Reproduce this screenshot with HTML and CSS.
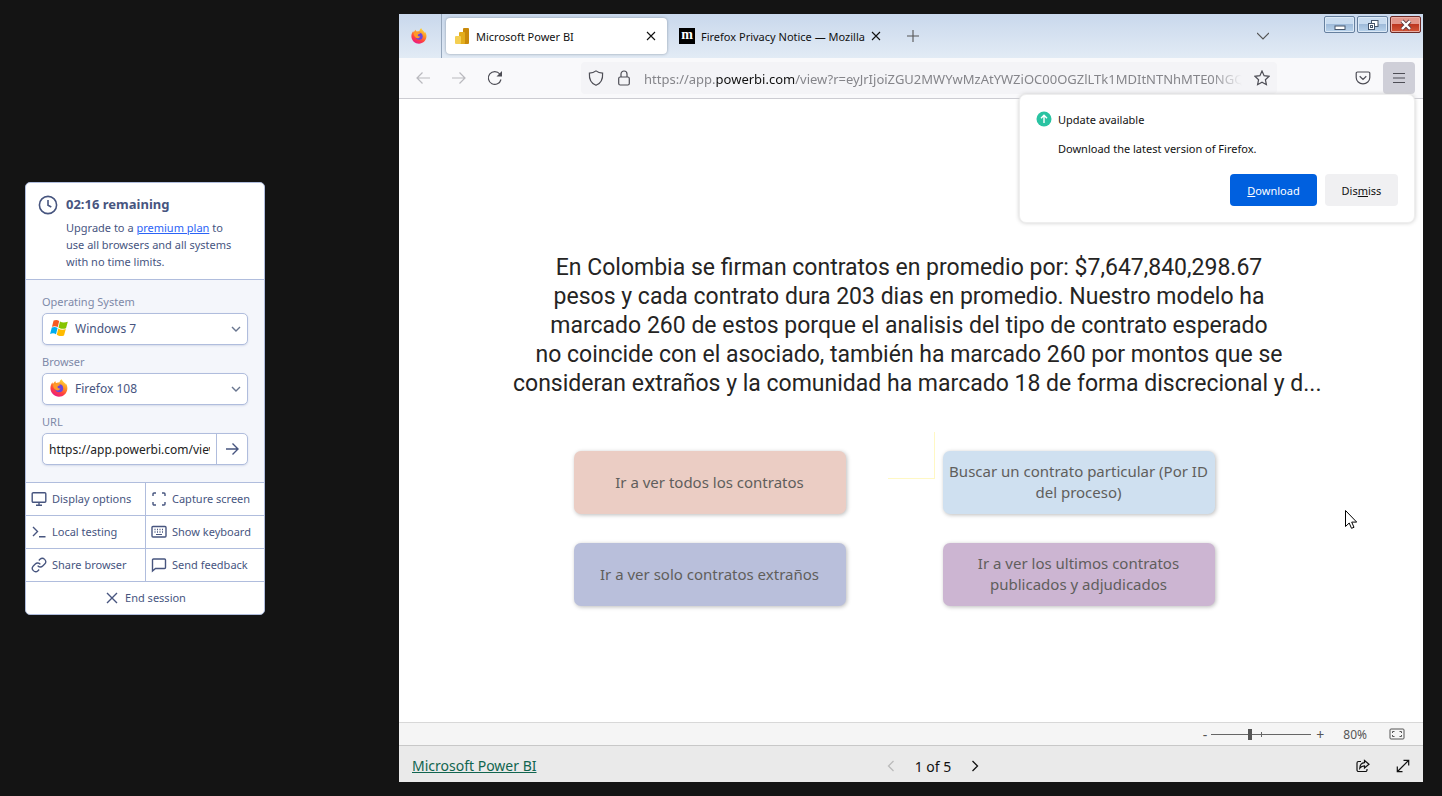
FILE: index.html
```html
<!DOCTYPE html>
<html lang="es">
<head>
<meta charset="utf-8">
<title>Live session</title>
<link rel="stylesheet" href="styles.css">
</head>
<body>
<svg class="defs" aria-hidden="true">
  <defs>
    <linearGradient id="fox" x1="0.8" y1="0" x2="0.3" y2="1"><stop offset="0" stop-color="#ffe23e"/><stop offset="0.4" stop-color="#ff9124"/><stop offset="0.7" stop-color="#ff4040"/><stop offset="1" stop-color="#e8178a"/></linearGradient>
    <symbol id="firefox" viewBox="0 0 20 20">
      <path fill="url(#fox)" d="M10.6 3.6C10.800 2 11.900.700 13 .300c.500 1.800 1.700 2.400 3 4 .800.900 1.100 1.400 1.300 2 .100-.600.100-1.200-.100-1.800C18.800 6.300 19.500 8.500 19.300 11c-.400 5-4.500 8.600-9.300 8.600C4.900 19.600.700 15.700.500 10.600.400 8 1.300 5.300 2.800 3.600c0 .800.200 1.400.500 1.900C4 4.400 4.800 3 6 2.200c0 1 .300 1.700.900 2.300 1.200-.300 2.600-.700 3.700-.900z"/>
      <circle cx="10.200" cy="10.200" r="4.400" fill="#6a45dd"/>
      <path fill="#ff9a28" d="M3.500 6c2-1.600 4.200-1.700 5.900-.500 1 .500 2 .600 2.200 1-.700 1.100-2.900 1-3.200 2.200-.200 1.500 1.800 2.300 3.200 1.500-1 2.800-4.400 3.300-6.200 1.300C3.900 10 3.200 8 3.500 6z"/>
    </symbol>
  </defs>
</svg>

<aside class="side">
  <section class="panel">
    <header class="remaining">
      <svg class="clock" viewBox="0 0 20 20"><circle cx="10" cy="10" r="8.600"/><path d="M10 5v5.300l3.300 1.700"/></svg>
      <div>
        <h1>02:16 remaining</h1>
        <p>Upgrade to a <a href="#plan">premium plan</a> to<br>use all browsers and all systems<br>with no time limits.</p>
      </div>
    </header>
    <form class="fields">
      <label for="os">Operating System</label>
      <div class="pick">
        <svg class="pick-icon" viewBox="0 0 18 18"><path fill="#f65a22" d="M3.600 1.600C5.700.600 7.500.900 9.200 1.900L7.800 8.100C6 7 4.200 6.900 2 7.700z"/><path fill="#86c400" d="M10 2.500c2 1.200 5 1.100 7.800.200L16 9.200c-2.500 1-5.400.900-7.500-.600z"/><path fill="#00adef" d="M1.800 8.600c2-.800 4-.700 5.800.400L6 15.200C4.300 14 2.200 14.100.100 14.900z"/><path fill="#ffbb00" d="M8.300 9.500c2.300 1.400 4.800 1.500 7.500.600L14 16.500c-2.500.900-5.100.900-7.200-.700z"/></svg>
        <select id="os"><option>Windows 7</option></select>
        <svg class="pick-arrow" viewBox="0 0 10 10"><path d="M1 3l4 4 4-4"/></svg>
      </div>
      <label for="br">Browser</label>
      <div class="pick">
        <svg class="pick-icon" viewBox="0 0 20 20"><use href="#firefox"/></svg>
        <select id="br"><option>Firefox 108</option></select>
        <svg class="pick-arrow" viewBox="0 0 10 10"><path d="M1 3l4 4 4-4"/></svg>
      </div>
      <label for="url">URL</label>
      <div class="url">
        <input id="url" type="text" value="https://app.powerbi.com/view?r=eyJrIjoi">
        <button type="button" aria-label="Go"><svg viewBox="0 0 14 14"><path d="M1 7h12M7.500 1.500L13 7l-5.500 5.500"/></svg></button>
      </div>
    </form>
    <nav class="actions">
      <button type="button"><svg viewBox="0 0 16 16"><rect x="1.200" y="1.700" width="13.600" height="9.600" rx="1"/><path d="M8 11.500V14M5 14.300h6"/></svg>Display options</button>
      <button type="button"><svg viewBox="0 0 16 16"><path d="M2 5V3a1 1 0 0 1 1-1h2M11 2h2a1 1 0 0 1 1 1v2M14 11v2a1 1 0 0 1-1 1h-2M5 14H3a1 1 0 0 1-1-1v-2"/></svg>Capture screen</button>
      <button type="button"><svg viewBox="0 0 16 16"><path d="M2 3l4.500 4.500L2 12M8 12.700h6.500"/></svg>Local testing</button>
      <button type="button"><svg viewBox="0 0 16 16"><rect x="1" y="2.500" width="14" height="10.500" rx="1"/><path stroke-dasharray="1 1.500" d="M3.500 5.500h9.500M3.500 8h9.500"/><path d="M5 10.500h6" stroke-width="1"/></svg>Show keyboard</button>
      <button type="button"><svg viewBox="0 0 24 24"><path stroke-width="2" d="M10 13a5 5 0 0 0 7.540.540l3-3a5 5 0 0 0-7.070-7.070l-1.720 1.710M14 11a5 5 0 0 0-7.540-.540l-3 3a5 5 0 0 0 7.070 7.070l1.710-1.710"/></svg>Share browser</button>
      <button type="button"><svg viewBox="0 0 16 16"><path d="M1.500 14V3a1 1 0 0 1 1-1h11a1 1 0 0 1 1 1v7.500a1 1 0 0 1-1 1H4.500z"/></svg>Send feedback</button>
      <button type="button" class="end"><svg viewBox="0 0 16 16"><path d="M3 3l10 10M13 3L3 13"/></svg>End session</button>
    </nav>
  </section>
</aside>

<main class="browser">
  <header class="tabs">
    <div class="pinned"><svg viewBox="0 0 20 20"><use href="#firefox"/></svg></div>
    <div class="tab active">
      <svg class="fav" viewBox="0 0 16 16"><rect x="9" y="0" width="6" height="16" rx="1" fill="#c98a0b"/><rect x="5" y="4" width="6" height="12" rx="1" fill="#e3ad1c"/><rect x="1" y="8" width="6" height="8" rx="1" fill="#f4cf52"/></svg>
      <span>Microsoft Power BI</span>
      <button type="button" aria-label="Close tab"><svg viewBox="0 0 10 10"><path d="M1 1l8 8M9 1L1 9"/></svg></button>
    </div>
    <div class="tab">
      <span class="moz">m</span>
      <span>Firefox Privacy Notice — Mozilla</span>
      <button type="button" aria-label="Close tab"><svg viewBox="0 0 10 10"><path d="M1 1l8 8M9 1L1 9"/></svg></button>
    </div>
    <button type="button" class="newtab" aria-label="New tab"><svg viewBox="0 0 12 12"><path d="M6 0v12M0 6h12"/></svg></button>
    <button type="button" class="list" aria-label="List tabs"><svg viewBox="0 0 12 12"><path d="M0 3l6 6 6-6"/></svg></button>
    <div class="win">
      <button type="button" aria-label="Minimize"><svg viewBox="0 0 16 12"><rect x="3" y="7" width="10" height="3.500"/></svg></button>
      <button type="button" aria-label="Restore"><svg viewBox="0 0 16 12"><rect x="6.500" y="1.500" width="6.500" height="6"/><rect x="3.500" y="4.500" width="6" height="6"/><rect x="5.500" y="6.500" width="2" height="2"/></svg></button>
      <button type="button" class="x" aria-label="Close"><svg viewBox="0 0 16 12"><path class="xo" d="M4 2l8 8M12 2l-8 8"/><path class="xi" d="M4 2l8 8M12 2l-8 8"/></svg></button>
    </div>
  </header>

  <div class="toolbar">
    <button type="button" class="off" aria-label="Back"><svg viewBox="0 0 16 16"><path d="M15 8H2M7.500 2.500L2 8l5.500 5.500"/></svg></button>
    <button type="button" class="off" aria-label="Forward"><svg viewBox="0 0 16 16"><path d="M1 8h13M8.500 2.500L14 8l-5.500 5.500"/></svg></button>
    <button type="button" aria-label="Reload"><svg viewBox="0 0 16 16"><path d="M14 9.500A6.400 6.400 0 1 1 12.800 4"/><path class="solid" d="M15 1v5.500H9.500z"/></svg></button>
    <div class="address">
      <svg viewBox="0 0 16 16"><path d="M8 .900c2 1.600 4.200 2.200 6.600 2.300C15 9 12.500 13.500 8 15.300 3.500 13.500 1 9 1.400 3.200 3.800 3.100 6 2.500 8 .900z"/></svg>
      <svg viewBox="0 0 16 16"><rect x="2.700" y="7" width="10.600" height="8" rx="1.500"/><path d="M5 7V4a3 3 0 0 1 6 0v3"/></svg>
      <div class="link">https://app.<b>powerbi.com</b>/view?r=eyJrIjoiZGU2MWYwMzAtYWZiOC00OGZlLTk1MDItNTNhMTE0NGQ</div>
      <svg viewBox="0 0 16 16"><path d="M8 1l2.100 4.700 5 .600-3.700 3.400 1 5L8 12.200l-4.400 2.500 1-5L.900 6.300l5-.600z"/></svg>
    </div>
    <div class="ends">
      <button type="button" aria-label="Save to Pocket"><svg viewBox="0 0 16 16"><path d="M2.500 2h11a1.300 1.300 0 0 1 1.300 1.300V7.500a6.800 6.300 0 0 1-13.600 0V3.300A1.300 1.300 0 0 1 2.500 2zM4.700 6.300L8 9.500l3.300-3.200"/></svg></button>
      <button type="button" class="menu" aria-label="Menu"><svg viewBox="0 0 16 16"><path d="M2 3.500h12M2 8h12M2 12.500h12"/></svg></button>
    </div>
  </div>

  <section class="report">
    <p class="headline">En Colombia se firman contratos en promedio por: $7,647,840,298.67<br>pesos y cada contrato dura 203 dias en promedio. Nuestro modelo ha<br>marcado 260 de estos porque el analisis del tipo de contrato esperado<br>no coincide con el asociado, también ha marcado 260 por montos que se<br>consideran extraños y la comunidad ha marcado 18 de forma discrecional y d...</p>
    <div class="tiles">
      <button type="button" class="t1">Ir a ver todos los contratos</button>
      <button type="button" class="t2">Buscar un contrato particular (Por ID del proceso)</button>
      <button type="button" class="t3">Ir a ver solo contratos extraños</button>
      <button type="button" class="t4">Ir a ver los ultimos contratos publicados y adjudicados</button>
      <i class="trace"></i>
    </div>
    <svg class="cursor" viewBox="0 0 12 19"><path d="M.500.500v16l3.700-3.500 2.300 5.300 2.500-1-2.300-5.200h5z"/></svg>
  </section>

  <div class="zoombar">
    <button type="button" aria-label="Zoom out">-</button>
    <input type="range" min="10" max="150" value="64" aria-label="Zoom">
    <button type="button" aria-label="Zoom in">+</button>
    <span>80%</span>
    <button type="button" aria-label="Fit to page"><svg viewBox="0 0 16 12"><rect x="1" y="1" width="14" height="10" rx="1"/><path d="M3.500 5V3.500H5.500M10.500 3.500h2V5M12.500 7v1.500h-2M5.500 8.500h-2V7"/></svg></button>
  </div>
  <footer class="foot">
    <a href="#powerbi">Microsoft Power BI</a>
    <div class="pager">
      <button type="button" class="prev" aria-label="Previous"><svg viewBox="0 0 8 12"><path d="M6.500 1l-5 5 5 5"/></svg></button>
      <span>1 of 5</span>
      <button type="button" aria-label="Next"><svg viewBox="0 0 8 12"><path d="M1.500 1l5 5-5 5"/></svg></button>
    </div>
    <div class="tools">
      <button type="button" aria-label="Share"><svg viewBox="0 0 14 14"><path d="M5 2.500H2.500A1.500 1.500 0 0 0 1 4v7a1.500 1.500 0 0 0 1.500 1.500h7A1.500 1.500 0 0 0 11 11v-1M8.500 1.500L13 5.200 8.500 9V6.800C6.500 6.800 5 7.500 3.800 9.200 4 6 5.500 3.900 8.500 3.700z"/></svg></button>
      <button type="button" aria-label="Full screen"><svg viewBox="0 0 14 14"><path d="M1.500 12.500l11-11M7.500 1.300h5.200v5.200M1.300 7.500v5.200h5.200"/></svg></button>
    </div>
  </footer>

  <div class="popup" role="dialog" aria-label="Update available">
    <svg viewBox="0 0 16 16"><circle cx="8" cy="8" r="7.500"/><path d="M8 12V4.500M5 7.300l3-3 3 3"/></svg>
    <div class="popup-text">
      <strong>Update available</strong>
      <p>Download the latest version of Firefox.</p>
    </div>
    <div class="popup-buttons">
      <button type="button" class="primary"><u>D</u>ownload</button>
      <button type="button">Dis<u>m</u>iss</button>
    </div>
  </div>
</main>
</body>
</html>
```
FILE: styles.css
```css
* { box-sizing: border-box; }
body {
  margin: 0;
  min-height: 100vh;
  display: flex;
  background: #141414;
  font: 11px/17px "Noto Sans", "Open Sans", sans-serif;
  color: #47557f;
}
button, select, input { font: inherit; color: inherit; margin: 0; }
button { border: 0; padding: 0; background: none; display: flex; align-items: center; justify-content: center; }
svg { display: block; flex: none; fill: none; stroke: currentColor; stroke-width: 1.4; }
.defs { position: absolute; width: 0; height: 0; }
h1, p { margin: 0; }

.side { width: 399px; flex: none; display: flex; align-items: center; padding-left: 25px; }
.panel { width: 240px; background: #fff; border: 1px solid #b0bddd; border-radius: 5px; overflow: hidden; }
.remaining { display: flex; gap: 8px; padding: 12px; border-bottom: 1px solid #b0bddd; padding-bottom: 9px; }
.remaining h1 { font-size: 13px; line-height: 19px; font-weight: 700; margin-bottom: 5px; white-space: nowrap; }
.remaining p { white-space: nowrap; }
.remaining a { color: #2b63f6; }
.clock { width: 20px; height: 20px; stroke-width: 1.6; }
.fields { display: flex; flex-direction: column; background: #f4f6fb; padding: 14px 16px 17px; }
.fields label { color: #7e89a8; line-height: 16px; margin-bottom: 3px; }
.pick { position: relative; margin-bottom: 9px; display: flex; }
.pick select { appearance: none; width: 100%; height: 32px; padding: 0 32px; background: #fff; border: 1px solid #b0bddd; border-radius: 5px; font-size: 12px; box-shadow: 0 1px 2px #d5dbea; }
.pick-icon { position: absolute; left: 8px; top: 6px; width: 18px; height: 18px; stroke: none; }
.pick-arrow { position: absolute; right: 7px; top: 11px; width: 10px; height: 10px; color: #68758f; }
.url { display: flex; height: 32px; background: #fff; border: 1px solid #b0bddd; border-radius: 5px; box-shadow: 0 1px 2px #d5dbea; }
.url input { flex: 1; min-width: 0; border: 0; padding: 2px 6px 0; background: none; color: #222; font-size: 12px; }
.url button { width: 31px; border-left: 1px solid #b0bddd; }
.url svg { width: 14px; height: 14px; }
.actions { display: grid; grid-template-columns: 1fr 1fr; }
.actions button { height: 33px; justify-content: flex-start; gap: 5px; padding-left: 5px; border-top: 1px solid #b0bddd; white-space: nowrap; }
.actions button:nth-child(even) { border-left: 1px solid #b0bddd; }
.actions svg { width: 16px; height: 16px; }
.actions .end { grid-column: 1 / -1; justify-content: center; padding: 0; }

.browser { position: relative; flex: 1; min-width: 0; margin: 14px 19px 14px 0; display: flex; flex-direction: column; background: #fff; color: #111; }
.tabs { display: flex; align-items: center; height: 44px; background: linear-gradient(#c9d8ec, #e2ebf5); }
.pinned { width: 43px; align-self: stretch; display: flex; align-items: center; padding-left: 12px; border-right: 1px solid #95a6bb; }
.pinned svg { width: 16px; height: 16px; stroke: none; }
.tab { display: flex; align-items: center; gap: 6px; width: 214px; height: 36px; padding-left: 12px; white-space: nowrap; }
.tab button { margin-left: auto; }
.tab.active { width: 221px; margin-left: 4px; padding: 0 11px 0 8px; background: #fff; border-radius: 4px; box-shadow: 0 0 3px #8c98a8; }
.tab button svg { width: 10px; height: 10px; stroke-width: 1.1; }
.fav { width: 16px; height: 16px; stroke: none; }
.moz { width: 16px; height: 16px; background: #000; color: #fff; font: 700 14px/13px "Liberation Serif", serif; text-align: center; }
.newtab, .list { color: #555; }
.newtab { margin-left: 26px; }
.newtab svg { width: 12px; height: 12px; stroke-width: 1.1; }
.list { margin-left: auto; margin-right: 55px; }
.list svg { width: 12px; height: 12px; stroke-width: 1.2; }
.win { display: flex; gap: 2px; align-self: flex-start; padding: 2px 2px 0 0; }
.win button { width: 31px; height: 17px; border: 1px solid #66809f; border-radius: 2px; background: linear-gradient(#c9dcf0 45%, #9fbbda 50%, #b9d3ec); color: #45556b; box-shadow: inset 0 0 0 1px #dce9f6; }
.win svg { width: 16px; height: 12px; fill: #fff; stroke-width: 1; }
.win .x { border-color: #6d2a26; background: linear-gradient(#e2968b 45%, #bd3620 50%, #d3583a); box-shadow: inset 0 0 0 1px #e9aea4; }
.win .xo { stroke: #5d3b40; stroke-width: 4; }
.win .xi { stroke: #fff; stroke-width: 2.4; }

.toolbar { display: flex; align-items: center; height: 41px; padding: 0 8px 0 16px; gap: 20px; background: #f9f9fb; border-bottom: 1px solid #ccccd2; color: #4d4d55; }
.toolbar svg { width: 16px; height: 16px; stroke-width: 1.2; }
.toolbar .off { color: #b9b9be; }
.toolbar .solid { fill: currentColor; stroke: none; }
.address { flex: 1; min-width: 0; height: 32px; margin: 0 58px 0 58px; padding: 0 7px; display: flex; align-items: center; gap: 12px; background: #f4f4f7; border-radius: 4px; }
.link { flex: 1; min-width: 0; overflow: hidden; white-space: nowrap; font-size: 13px; color: #85858a; line-height: 20px; padding-top: 1px; mask-image: linear-gradient(90deg, #000 95%, transparent); }
.link b { font-weight: 400; color: #111; }
.ends { display: flex; gap: 12px; }
.menu { width: 32px; height: 32px; background: #cfcfd8; border-radius: 4px; }

.report { position: relative; flex: 1; display: flex; flex-direction: column; align-items: center; padding: 154px 4px 0 0; }
.headline { width: 792px; font: 23px/29px Roboto, sans-serif; color: #252423; text-align: center; white-space: nowrap; }
.tiles { position: relative; display: grid; grid-template-columns: 272px 272px; grid-auto-rows: 63px; gap: 29px 97px; margin: 53px 30px 0 0; }
.tiles button { padding: 0 4px 1px; border-radius: 7px; box-shadow: 1px 1px 4px #bbb; font: 15px/21px "Noto Sans", sans-serif; color: #605e5c; }
.tiles .t1 { background: #ebcdc4; }
.tiles .t2 { background: #cfe0f0; }
.tiles .t3 { background: #b9bfdb; }
.tiles .t4 { background: #ccb5d2; }
.trace { position: absolute; left: 314px; top: -19px; width: 47px; height: 47px; border: solid #fff8c4; border-width: 0 1px 1px 0; }
.cursor { position: absolute; right: 66px; top: 411px; width: 12px; height: 19px; fill: #fff; stroke: #000; stroke-width: 1; }

.zoombar { display: flex; align-items: center; justify-content: flex-end; height: 24px; padding-right: 18px; background: #f5f5f5; border-top: 1px solid #d8d8d8; border-bottom: 1px solid #c8c8c8; color: #555; font-size: 12px; }
.zoombar button { font-size: 14px; }
.zoombar input { appearance: none; width: 100px; height: 12px; margin: 0 5px 0 4px; background: linear-gradient(#666, #666) 50px 50% / 1px 5px no-repeat, linear-gradient(#666, #666) 0 50% / 100% 1px no-repeat; }
.zoombar input::-webkit-slider-thumb { appearance: none; width: 4px; height: 11px; background: #555; }
.zoombar span { margin: 0 22px 0 19px; }
.zoombar svg { width: 16px; height: 12px; stroke-width: 1; }
.foot { display: grid; grid-template-columns: 1fr auto 1fr; align-items: center; height: 36px; padding: 4px 13px 0; background: #eaeaea; color: #111; }
.foot a { color: #11654f; font-size: 14px; line-height: 20px; }
.pager { display: flex; align-items: center; gap: 20px; font-size: 14px; padding-left: 44px; }
.pager svg { width: 8px; height: 12px; stroke-width: 1.3; }
.pager .prev { color: #bbb; }
.tools { display: flex; justify-content: flex-end; gap: 26px; }
.tools svg { width: 14px; height: 14px; stroke-width: 1.2; }

.popup { position: absolute; top: 80px; right: 8px; width: 396px; height: 129px; padding: 16px; display: grid; grid-template-columns: 16px 1fr; grid-template-rows: 1fr auto; column-gap: 6px; background: #fff; border: 1px solid #eee; border-radius: 7px; box-shadow: 0 0 4px #ccc; color: #111; }
.popup > svg { width: 16px; height: 16px; fill: #2ac3a2; stroke: #fff; }
.popup circle { stroke: none; }
.popup strong { font-weight: 400; display: block; margin-bottom: 12px; }
.popup-buttons { grid-column: 1 / -1; display: flex; justify-content: flex-end; gap: 8px; }
.popup-buttons button { display: block; height: 32px; width: 73px; border-radius: 4px; background: #f0f0f2; }
.popup-buttons .primary { width: 87px; background: #0060df; color: #fff; }
```
